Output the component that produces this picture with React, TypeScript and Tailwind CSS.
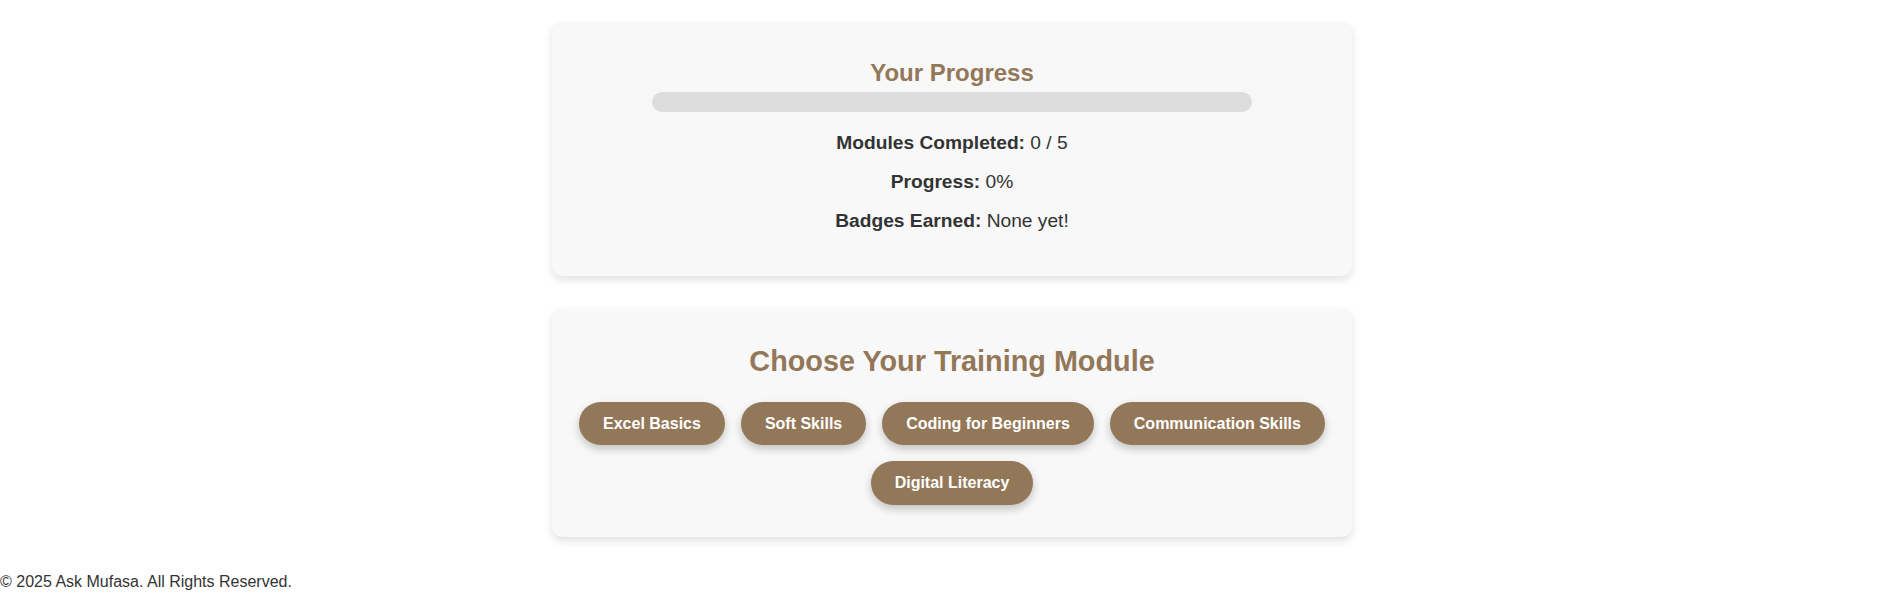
import React from 'react';

const modules = [
  'Excel Basics',
  'Soft Skills',
  'Coding for Beginners',
  'Communication Skills',
  'Digital Literacy',
];

const ProgressCard = () => {
  return (
    <section className="w-[800px] mx-auto bg-[#f8f8f8] rounded-[10px] shadow-[0_4px_8px_rgba(0,0,0,0.12)] pt-[37px] pb-[43.6px] px-[20px] text-center">
      <h2 className="text-[24px] leading-[28px] font-bold text-[#937759]">Your Progress</h2>
      <div className="w-[600px] h-[20px] mx-auto mt-[5px] rounded-full bg-[#dddddd]">
        <div className="h-full rounded-full bg-[#937759]" style={{ width: '0%' }} />
      </div>
      <div className="mt-[20.4px] flex flex-col gap-[17px] text-[19.2px] leading-[22px] text-[#333333]">
        <p>
          <span className="font-bold">Modules Completed:</span> 0 / 5
        </p>
        <p>
          <span className="font-bold">Progress:</span> 0%
        </p>
        <p>
          <span className="font-bold">Badges Earned:</span> None yet!
        </p>
      </div>
    </section>
  );
};

const ModuleCard = () => {
  return (
    <section className="w-[800px] mx-auto bg-[#f8f8f8] rounded-[10px] shadow-[0_4px_8px_rgba(0,0,0,0.12)] pt-[37.5px] pb-[32px] px-[20px] text-center">
      <h2 className="text-[28.8px] leading-[33px] font-bold text-[#937759]">Choose Your Training Module</h2>
      <div className="mt-[23.5px] flex flex-wrap justify-center gap-4">
        {modules.map(name => (
          <button
            key={name}
            className="bg-[#937759] text-white font-bold text-[16px] leading-[19.5px] px-6 py-3 rounded-full shadow-[0_4px_8px_rgba(0,0,0,0.22)]"
          >
            {name}
          </button>
        ))}
      </div>
    </section>
  );
};

export default function App() {
  return (
    <div className="min-h-[594px] bg-white text-[#333333] font-['Liberation_Sans',Arial,sans-serif]">
      <main className="pt-[22px] flex flex-col gap-[32px]">
        <ProgressCard />
        <ModuleCard />
      </main>
      <footer className="mt-[36px] text-[16px] leading-[18px] text-[#333333]">
        © 2025 Ask Mufasa. All Rights Reserved.
      </footer>
    </div>
  );
}
